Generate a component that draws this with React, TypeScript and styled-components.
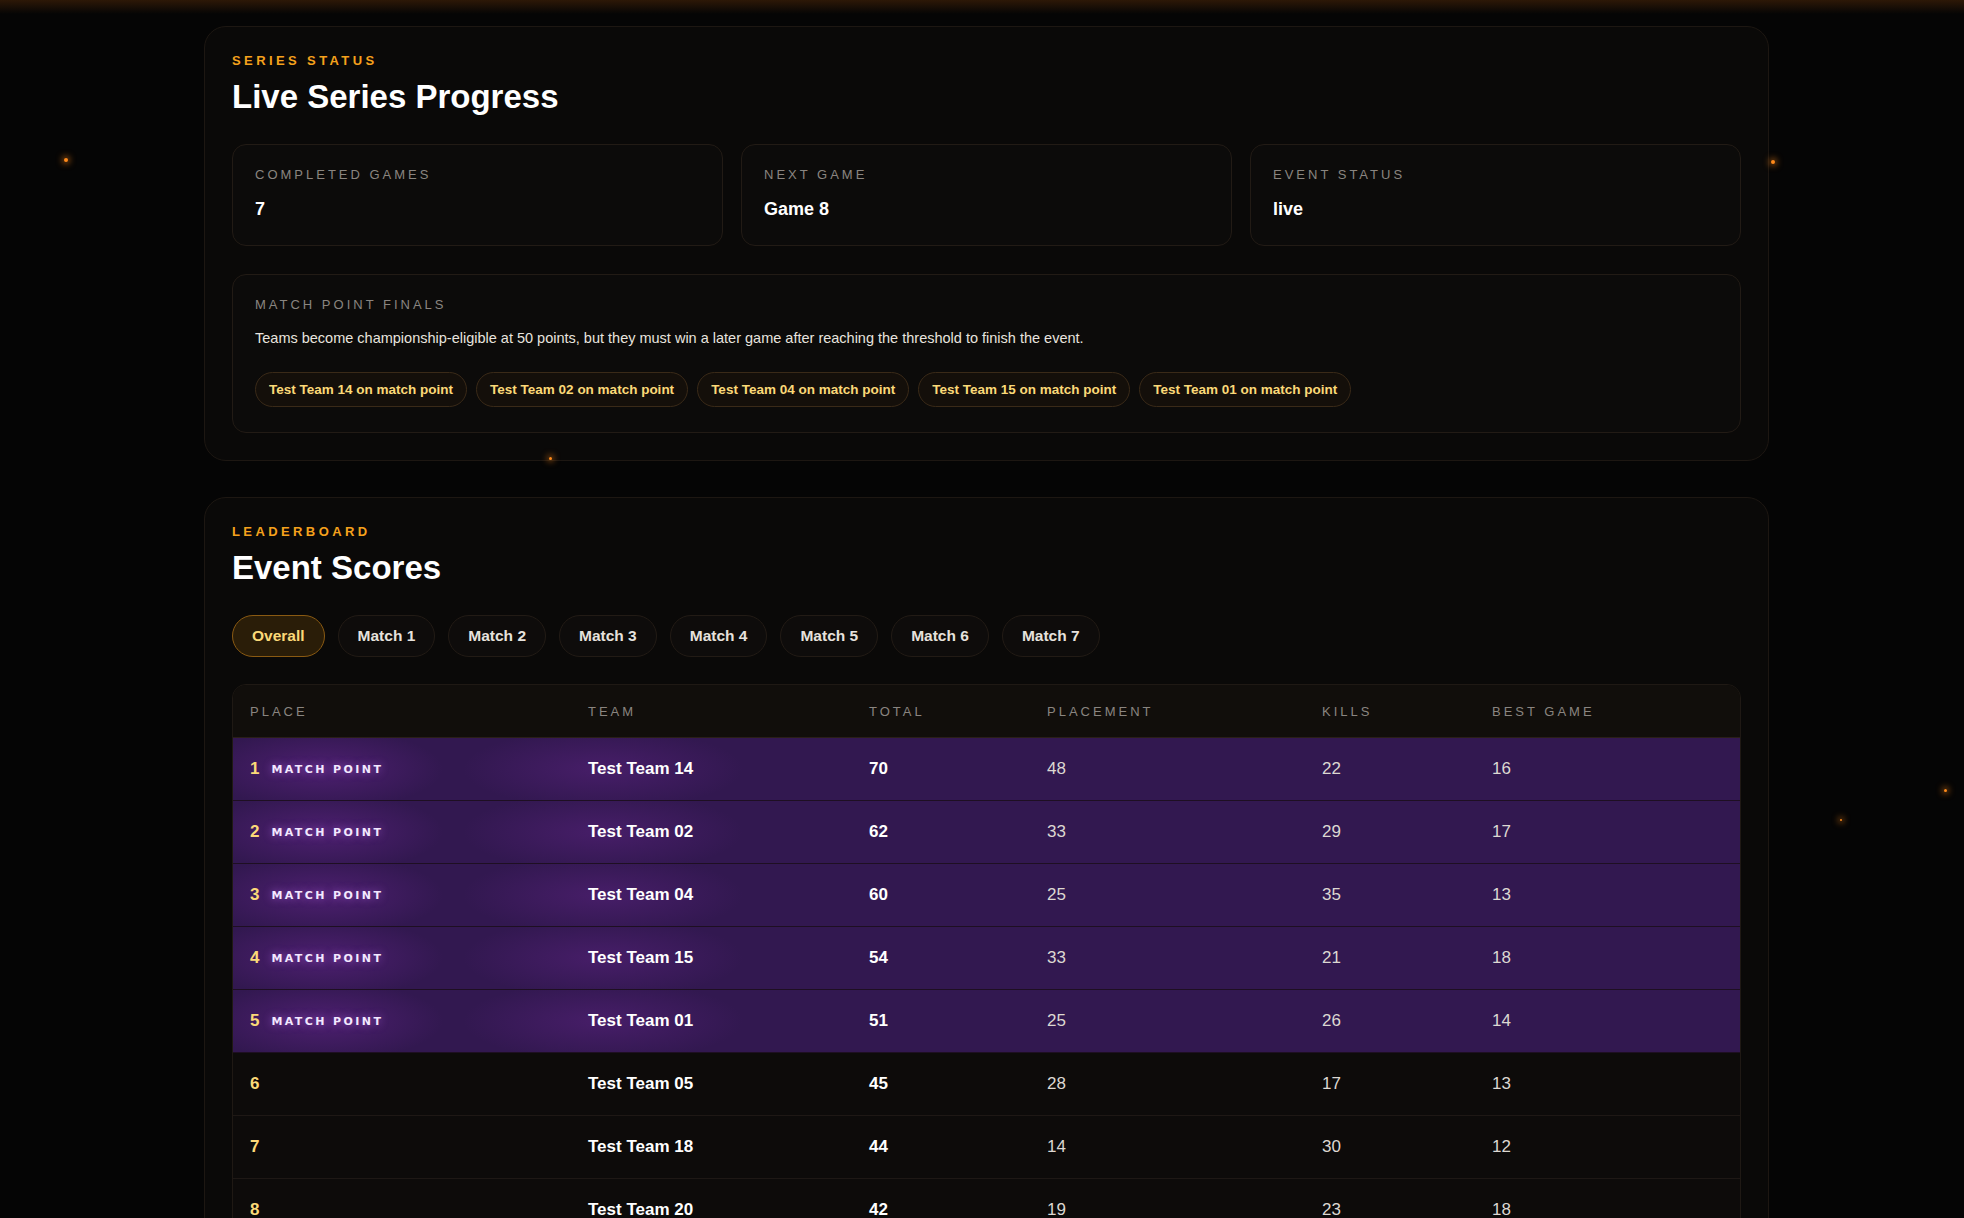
import React from "react";
import styled, { createGlobalStyle } from "styled-components";

const Global = createGlobalStyle`
  html, body { margin: 0; padding: 0; background: #050505; }
  body { font-family: "Liberation Sans", Arial, sans-serif; color: #fff; }
`;

const Page = styled.div`
  min-height: 1218px;
  background: linear-gradient(180deg, rgba(120,60,10,0.35) 0px, rgba(5,5,5,0) 14px), #050505;
  padding: 26px 0 0 204px;
  display: flex;
  flex-direction: column;
  gap: 36px;
  position: relative;
  overflow: hidden;
`;

const Spark = styled.div<{ $x: number; $y: number; $s: number }>`
  position: absolute;
  left: ${(p) => p.$x}px;
  top: ${(p) => p.$y}px;
  width: ${(p) => p.$s}px;
  height: ${(p) => p.$s}px;
  border-radius: 50%;
  background: #ff8a1a;
  box-shadow: 0 0 6px 2px rgba(255,138,26,0.5);
`;

const Panel = styled.section`
  width: 1565px;
  box-sizing: border-box;
  border: 1px solid #1d1712;
  border-radius: 22px;
  background: #0a0908;
  padding: 26px 27px 27px;
`;

const Eyebrow = styled.div`
  color: #f5a11c;
  font-size: 13px;
  font-weight: 700;
  letter-spacing: 3.4px;
  text-transform: uppercase;
`;

const Title = styled.h2`
  margin: 10px 0 28px;
  font-size: 33px;
  font-weight: 700;
  color: #fff;
`;

const Stats = styled.div`
  display: grid;
  grid-template-columns: repeat(3, 1fr);
  gap: 18px;
  margin-bottom: 28px;
`;

const Card = styled.div`
  border: 1px solid #221b15;
  border-radius: 14px;
  background: #0c0b0a;
  padding: 22px 22px 25px;
`;

const Label = styled.div`
  color: #8a8580;
  font-size: 13px;
  letter-spacing: 3px;
  text-transform: uppercase;
`;

const Value = styled.div`
  margin-top: 17px;
  font-size: 18px;
  font-weight: 700;
`;

const Desc = styled.div`
  margin-top: 18px;
  font-size: 14.5px;
  color: #e8e4df;
`;

const Chips = styled.div`
  display: flex;
  gap: 9px;
  margin-top: 26px;
`;

const Chip = styled.span`
  border: 1px solid #3a2a18;
  border-radius: 999px;
  background: #140f0a;
  color: #fbd978;
  font-size: 13.5px;
  font-weight: 700;
  padding: 9px 13px;
`;

const Tabs = styled.div`
  display: flex;
  gap: 13px;
  margin-top: 2px;
  margin-bottom: 27px;
`;

const Tab = styled.button<{ $active?: boolean }>`
  font-family: inherit;
  font-size: 15.5px;
  font-weight: 700;
  padding: 11px 19px;
  border-radius: 999px;
  border: 1px solid ${(p) => (p.$active ? "#8a5a12" : "#221b15")};
  background: ${(p) => (p.$active ? "#2a1d08" : "#0e0c0b")};
  color: ${(p) => (p.$active ? "#fbd978" : "#e6e2dd")};
`;

const Table = styled.div`
  border: 1px solid #1f1914;
  border-radius: 14px 14px 0 0;
  overflow: hidden;
`;

const cols = "338px 281px 178px 275px 170px 1fr";

const Head = styled.div`
  display: grid;
  grid-template-columns: ${cols};
  height: 52px;
  align-items: center;
  padding-left: 17px;
  background: #110e0b;
  border-bottom: 1px solid #2a1f18;
  color: #8a8580;
  font-size: 13px;
  letter-spacing: 3px;
`;

const Row = styled.div<{ $mp?: boolean }>`
  display: grid;
  grid-template-columns: ${cols};
  height: 62px;
  align-items: center;
  padding-left: 17px;
  border-bottom: 1px solid ${(p) => (p.$mp ? "#1e0f22" : "#1e1815")};
  background: ${(p) =>
    p.$mp
      ? "radial-gradient(ellipse 120px 40px at 90px 50%, rgba(110,40,150,0.45), transparent), radial-gradient(ellipse 140px 40px at 370px 50%, rgba(110,40,150,0.35), transparent), #321850"
      : "#0d0b0a"};
  font-size: 17px;
`;

const Place = styled.div`
  display: flex;
  align-items: center;
  gap: 12px;
  color: #fbd978;
  font-weight: 700;
`;

const Badge = styled.span`
  color: #f3e8ff;
  font-size: 11px;
  font-weight: 900;
  letter-spacing: 2.4px;
  font-family: "DejaVu Sans", sans-serif;
  text-shadow: 0 0 8px rgba(200,120,255,0.6);
`;

const Strong = styled.div`
  font-weight: 700;
  color: #fff;
`;

const Num = styled.div`
  color: #ddd8d2;
`;

const rows = [
  [1, "Test Team 14", 70, 48, 22, 16, true],
  [2, "Test Team 02", 62, 33, 29, 17, true],
  [3, "Test Team 04", 60, 25, 35, 13, true],
  [4, "Test Team 15", 54, 33, 21, 18, true],
  [5, "Test Team 01", 51, 25, 26, 14, true],
  [6, "Test Team 05", 45, 28, 17, 13, false],
  [7, "Test Team 18", 44, 14, 30, 12, false],
  [8, "Test Team 20", 42, 19, 23, 18, false],
] as const;

export default function App() {
  return (
    <Page>
      <Global />
      <Spark $x={64} $y={158} $s={4} />
      <Spark $x={1771} $y={160} $s={4} />
      <Spark $x={549} $y={457} $s={3} />
      <Spark $x={1944} $y={789} $s={3} />
      <Spark $x={1840} $y={819} $s={2} />
      <Panel>
        <Eyebrow>Series Status</Eyebrow>
        <Title>Live Series Progress</Title>
        <Stats>
          <Card><Label>Completed Games</Label><Value>7</Value></Card>
          <Card><Label>Next Game</Label><Value>Game 8</Value></Card>
          <Card><Label>Event Status</Label><Value>live</Value></Card>
        </Stats>
        <Card>
          <Label>Match Point Finals</Label>
          <Desc>Teams become championship-eligible at 50 points, but they must win a later game after reaching the threshold to finish the event.</Desc>
          <Chips>
            {["14", "02", "04", "15", "01"].map((t) => (
              <Chip key={t}>Test Team {t} on match point</Chip>
            ))}
          </Chips>
        </Card>
      </Panel>
      <Panel>
        <Eyebrow>Leaderboard</Eyebrow>
        <Title>Event Scores</Title>
        <Tabs>
          <Tab $active>Overall</Tab>
          {[1, 2, 3, 4, 5, 6, 7].map((n) => (
            <Tab key={n}>Match {n}</Tab>
          ))}
        </Tabs>
        <Table>
          <Head>
            <div>PLACE</div><div>TEAM</div><div>TOTAL</div><div>PLACEMENT</div><div>KILLS</div><div>BEST GAME</div>
          </Head>
          {rows.map(([p, team, total, pl, k, b, mp]) => (
            <Row key={p} $mp={mp}>
              <Place>{p}{mp && <Badge>MATCH POINT</Badge>}</Place>
              <Strong>{team}</Strong>
              <Strong>{total}</Strong>
              <Num>{pl}</Num>
              <Num>{k}</Num>
              <Num>{b}</Num>
            </Row>
          ))}
        </Table>
      </Panel>
    </Page>
  );
}
